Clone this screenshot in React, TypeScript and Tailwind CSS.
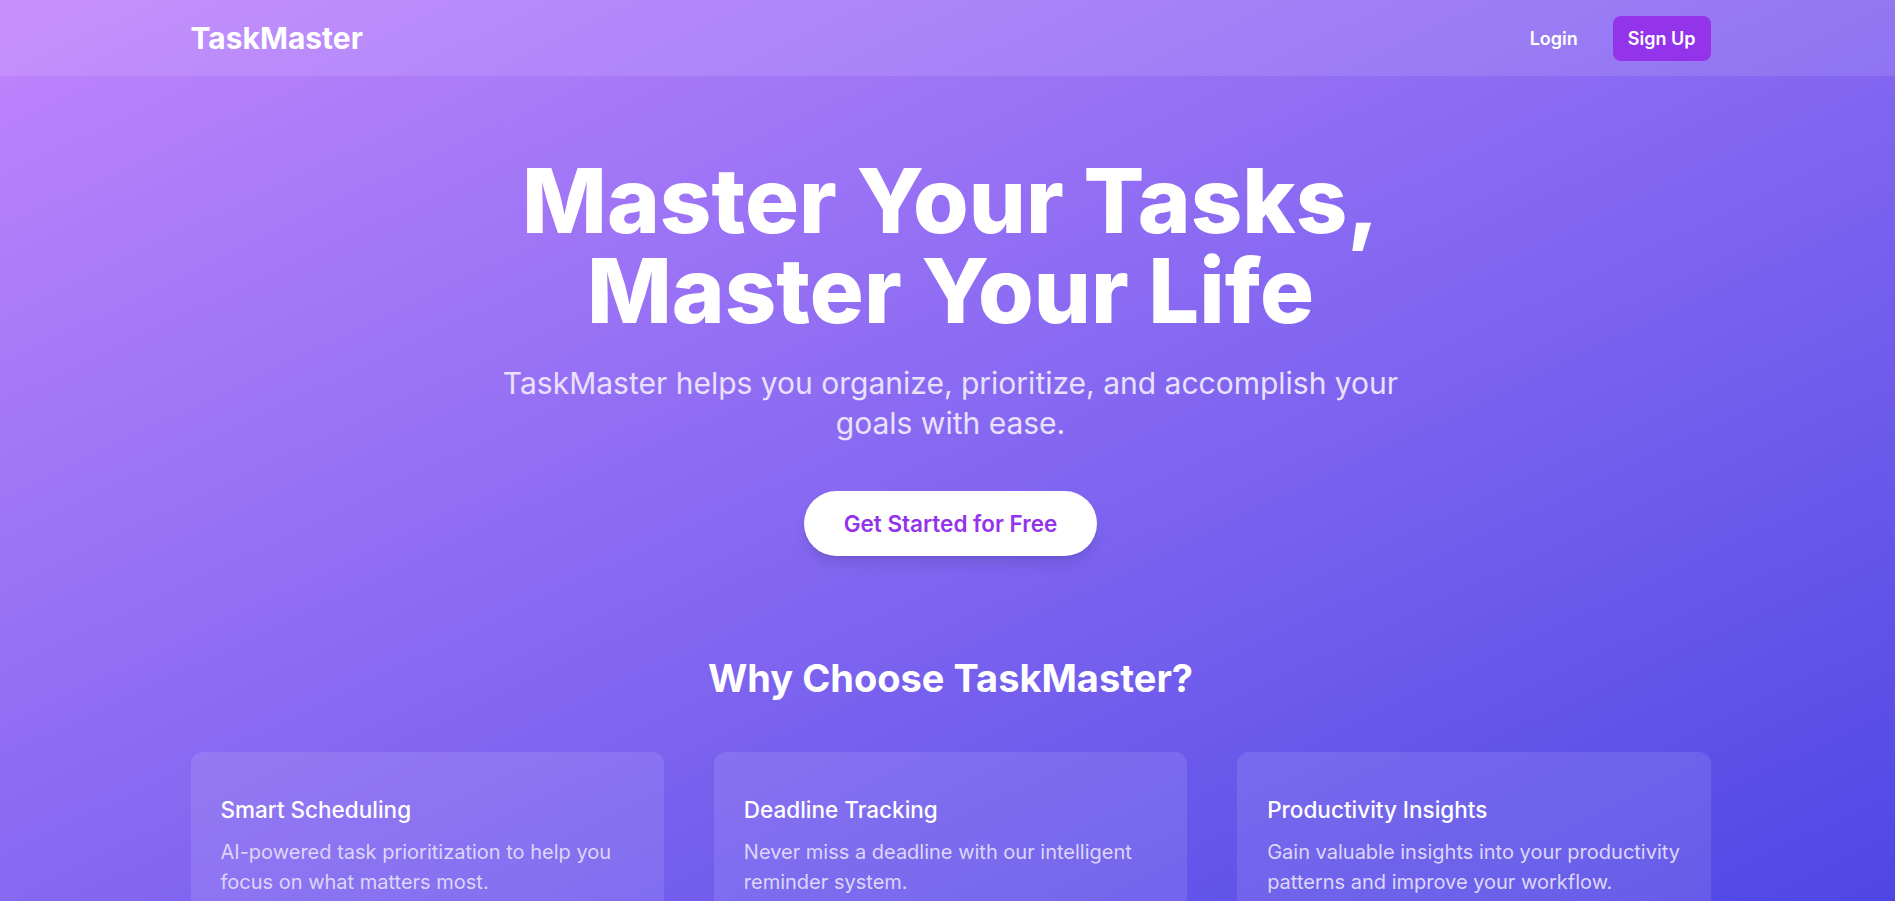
import React from 'react';

const features = [
  {
    title: 'Smart Scheduling',
    text: 'AI-powered task prioritization to help you focus on what matters most.',
  },
  {
    title: 'Deadline Tracking',
    text: 'Never miss a deadline with our intelligent reminder system.',
  },
  {
    title: 'Productivity Insights',
    text: 'Gain valuable insights into your productivity patterns and improve your workflow.',
  },
];

const Navbar = () => (
  <nav className="bg-white/10 h-[76px]">
    <div className="mx-auto max-w-[1526px] pl-[6px] h-full flex items-center justify-between">
      <a href="#" className="text-[30px] font-bold text-white">
        TaskMaster
      </a>
      <div className="flex items-center gap-[35px]">
        <a href="#" className="text-[18px] font-semibold text-white">
          Login
        </a>
        <a
          href="#"
          className="h-[45px] px-[15px] flex items-center rounded-lg bg-[#9333ea] text-[18px] font-semibold text-white"
        >
          Sign Up
        </a>
      </div>
    </div>
  </nav>
);

export default function App() {
  return (
    <div className="min-h-screen bg-fixed bg-gradient-to-br from-[#c084fc] to-[#4f46e5] font-['Inter','Noto_Sans',sans-serif] text-white">
      <Navbar />

      <main className="mx-auto max-w-[1526px] pl-[6px]">
        {/* Hero */}
        <section className="pt-[80px] flex flex-col items-center text-center">
          <h1 className="text-[90px] leading-none font-extrabold">
            Master Your Tasks,
            <br />
            Master Your Life
          </h1>
          <p className="mt-[27px] max-w-[900px] text-[30px] leading-[40px] text-[#e9e1fd]">
            TaskMaster helps you organize, prioritize, and accomplish your goals with ease.
          </p>
          <a
            href="#"
            className="mt-[48px] h-[65px] px-[40px] flex items-center rounded-full bg-white text-[22.5px] font-semibold text-[#9333ea] shadow-lg"
          >
            Get Started for Free
          </a>
        </section>

        {/* Features */}
        <section className="pt-[100px] pb-[50px]">
          <h2 className="text-center text-[38px] leading-[45px] font-bold">
            Why Choose TaskMaster?
          </h2>
          <div className="mt-[51px] grid grid-cols-3 gap-[50px]">
            {features.map((f) => (
              <div key={f.title} className="rounded-xl bg-white/10 px-[30px] pt-[40px] pb-[30px]">
                <h3 className="text-[22.5px] leading-[35px] font-medium">{f.title}</h3>
                <p className="mt-[10px] text-[20px] leading-[30px] text-[#ddd6fa]">{f.text}</p>
              </div>
            ))}
          </div>
        </section>
      </main>
    </div>
  );
}
